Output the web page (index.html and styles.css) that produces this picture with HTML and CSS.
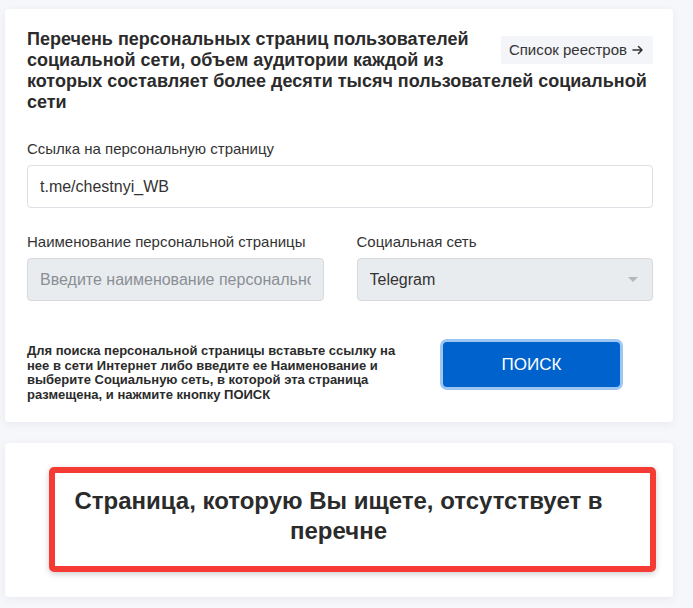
FILE: index.html
```html
<!DOCTYPE html>
<html lang="ru">
<head>
<meta charset="utf-8">
<title>Перечень персональных страниц</title>
<link rel="stylesheet" href="styles.css">
</head>
<body>
<main class="page">
  <section class="card search-card">
    <header class="head">
      <a class="registry-link" href="#"><span>Список реестров</span><svg class="arrow" width="12" height="12" viewBox="0 0 12 12"><path d="M1 6h9M6.5 2.5L10 6l-3.5 3.5" fill="none" stroke="#333" stroke-width="1.5" stroke-linecap="round" stroke-linejoin="round"/></svg></a>
      <h1 class="title">Перечень персональных страниц пользователей социальной сети, объем аудитории каждой из которых составляет более десяти тысяч пользователей социальной сети</h1>
    </header>
    <div class="field">
      <label class="label">Ссылка на персональную страницу</label>
      <div class="input"><span class="value">t.me/chestnyi_WB</span></div>
    </div>
    <div class="row">
      <div class="field">
        <label class="label">Наименование персональной страницы</label>
        <div class="input disabled"><span class="value placeholder">Введите наименование персональной страницы</span></div>
      </div>
      <div class="field">
        <label class="label">Социальная сеть</label>
        <div class="input disabled select">
          <span class="value">Telegram</span>
          <span class="caret"></span>
        </div>
      </div>
    </div>
    <div class="actions">
      <p class="hint">Для поиска персональной страницы вставьте ссылку на нее в сети Интернет либо введите ее Наименование и выберите Социальную сеть, в которой эта страница размещена, и нажмите кнопку ПОИСК</p>
      <button class="search-btn" type="button">ПОИСК</button>
    </div>
  </section>
  <section class="card result-card">
    <div class="result-box">
      <p class="result-text">Страница, которую Вы ищете, отсутствует в перечне</p>
    </div>
  </section>
</main>
</body>
</html>
```
FILE: styles.css
```css
* { box-sizing: border-box; }
html, body { margin: 0; padding: 0; }
body {
  background: #f6f7fa;
  font-family: "Liberation Sans", Arial, sans-serif;
  color: #333;
  width: 693px;
  height: 608px;
  overflow: hidden;
}
.page {
  padding: 9px 20px 0 5px;
  display: flex;
  flex-direction: column;
  gap: 21px;
}
.card {
  background: #fff;
  border-radius: 4px;
  box-shadow: 0 2px 8px rgba(40, 60, 110, 0.07);
}
.search-card {
  padding: 20px 20px 20px 22px;
  height: 413px;
}
.head::after { content: ""; display: block; clear: both; }
.title {
  margin: 0;
  font-size: 18px;
  line-height: 21px;
  font-weight: bold;
  color: #2b2b2b;
}
.registry-link {
  float: right;
  margin: 7px 0 0 30px;
  background: #f4f5f8;
  color: #333;
  text-decoration: none;
  font-size: 15px;
  padding: 6px 9px 6px 8px;
  line-height: 16px;
  border-radius: 2px;
  display: flex;
  align-items: center;
  gap: 5px;
}
.arrow { display: block; flex: none; }
.field {
  display: flex;
  flex-direction: column;
  flex: 1 1 0;
  min-width: 0;
}
.search-card > .field { margin-top: 27px; }
.label {
  font-size: 15px;
  line-height: 17px;
  color: #333;
  margin-bottom: 8px;
}
.input {
  height: 43px;
  border: 1px solid #dcdfe3;
  border-radius: 4px;
  background: #fff;
  padding: 0 12px;
  font-size: 16px;
  color: #333;
  display: flex;
  align-items: center;
}
.value {
  flex: 1 1 auto;
  min-width: 0;
  white-space: nowrap;
  overflow: hidden;
}
.input.disabled { background: #e9ecef; border-color: #d6d9dd; }
.placeholder { color: #8a8f95; }
.caret {
  flex: none;
  width: 0; height: 0;
  border-left: 5px solid transparent;
  border-right: 5px solid transparent;
  border-top: 5px solid #b5b8bb;
  margin-right: 2px;
}
.row {
  display: flex;
  gap: 33px;
  margin-top: 25px;
}
.actions {
  display: flex;
  align-items: flex-start;
  margin-top: 41px;
}
.hint {
  margin: 2px 0 0;
  width: 375px;
  font-size: 13px;
  line-height: 14.5px;
  font-weight: bold;
  color: #2b2b2b;
}
.search-btn {
  margin-left: 41px;
  width: 177px;
  height: 45px;
  background: #0062cc;
  color: #fff;
  border: none;
  border-radius: 4px;
  box-shadow: 0 0 0 3px #9dc6f3;
  font-family: "Liberation Sans", Arial, sans-serif;
  font-size: 17px;
  letter-spacing: 0;
}
.result-card {
  height: 154px;
  padding: 24px 17px 0 44px;
}
.result-box {
  height: 105px;
  border: 6px solid #f63b34;
  border-radius: 5px;
  box-shadow: 0 2px 6px rgba(0,0,0,0.2);
  padding: 13px 30px 0 2px;
}
.result-text {
  margin: 0;
  text-align: center;
  font-size: 24px;
  line-height: 30px;
  font-weight: bold;
  color: #2b2b2b;
}
```
